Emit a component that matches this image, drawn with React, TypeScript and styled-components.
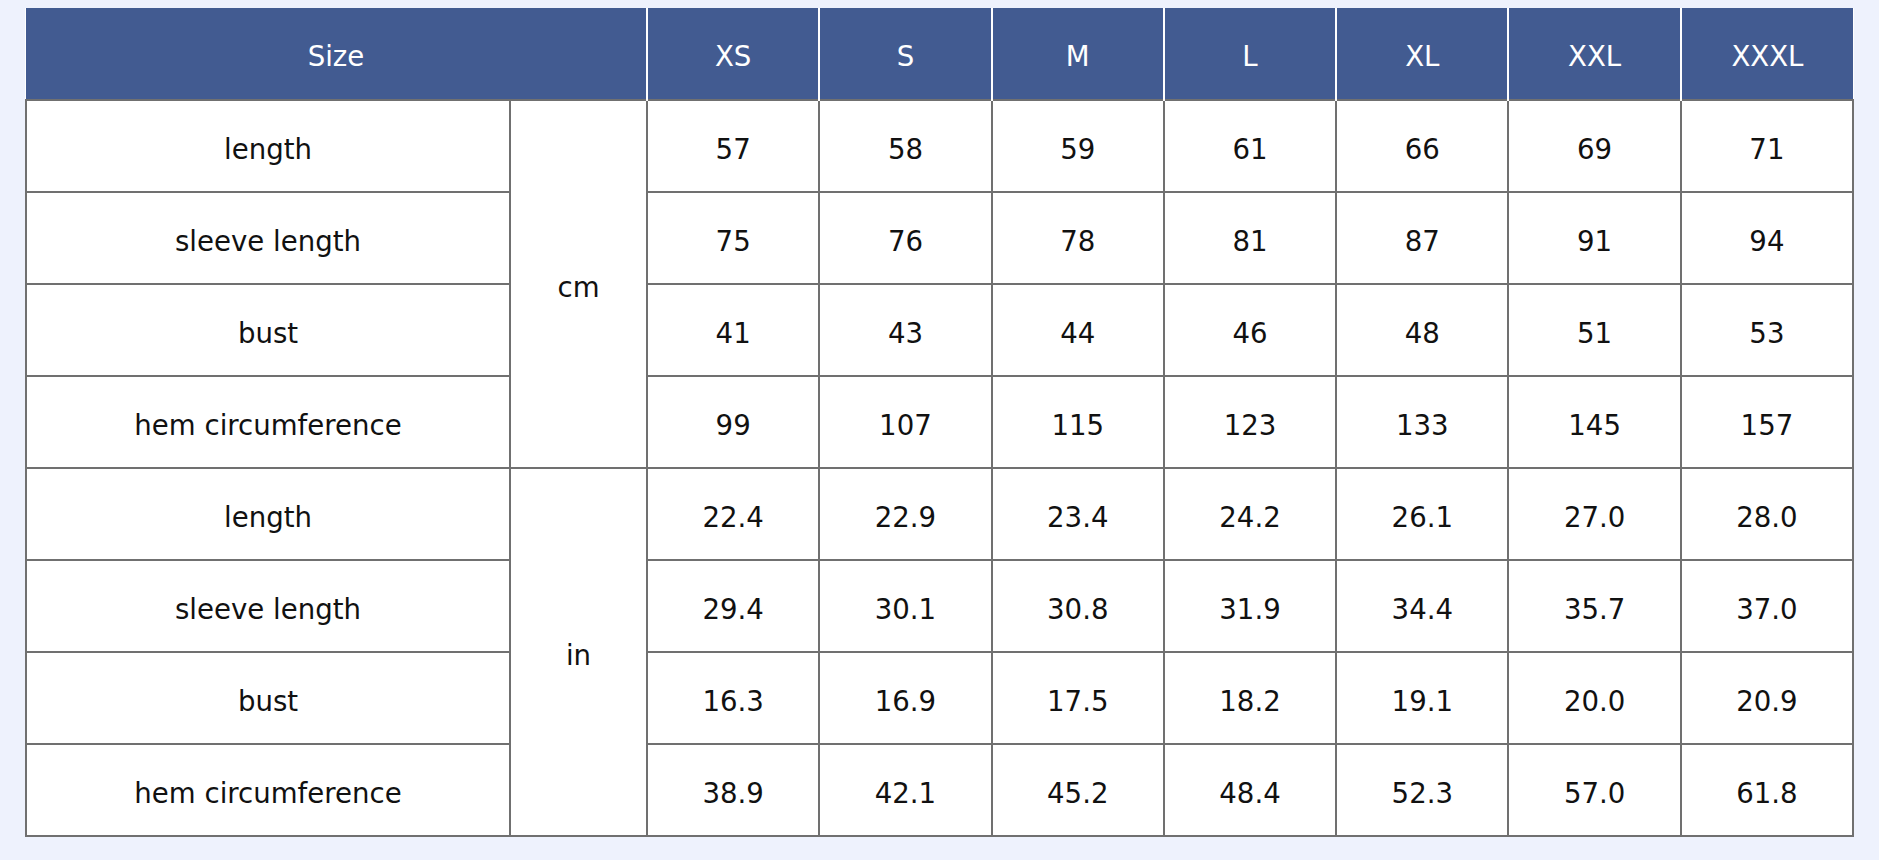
import styled, { createGlobalStyle } from "styled-components";

const GlobalStyle = createGlobalStyle`
  html, body {
    margin: 0;
    padding: 0;
    background: #eef2fd;
  }
  body {
    font-family: "DejaVu Sans", Verdana, sans-serif;
  }
`;

const Page = styled.div`
  padding: 8px 27px 23px 25px;
`;

const Table = styled.table`
  width: 1827px;
  table-layout: fixed;
  border-collapse: collapse;
  background: #fff;
  font-size: 27.6px;
  color: #111;
`;

const HeadCell = styled.th`
  height: 86px;
  padding: 5px 0 0;
  background: #425b91;
  color: #fff;
  font-weight: normal;
  text-align: center;
  border-left: 2px solid #fff;
  &:first-child {
    border-left: none;
  }
`;

const Cell = styled.td`
  height: 83px;
  padding: 7px 0 0;
  text-align: center;
  vertical-align: middle;
  border: 2px solid #707070;
`;

const sizes = ["XS", "S", "M", "L", "XL", "XXL", "XXXL"];

interface IGroup {
  unit: string;
  rows: { label: string; values: string[] }[];
}

const groups: IGroup[] = [
  {
    unit: "cm",
    rows: [
      { label: "length", values: ["57", "58", "59", "61", "66", "69", "71"] },
      { label: "sleeve length", values: ["75", "76", "78", "81", "87", "91", "94"] },
      { label: "bust", values: ["41", "43", "44", "46", "48", "51", "53"] },
      { label: "hem circumference", values: ["99", "107", "115", "123", "133", "145", "157"] },
    ],
  },
  {
    unit: "in",
    rows: [
      { label: "length", values: ["22.4", "22.9", "23.4", "24.2", "26.1", "27.0", "28.0"] },
      { label: "sleeve length", values: ["29.4", "30.1", "30.8", "31.9", "34.4", "35.7", "37.0"] },
      { label: "bust", values: ["16.3", "16.9", "17.5", "18.2", "19.1", "20.0", "20.9"] },
      { label: "hem circumference", values: ["38.9", "42.1", "45.2", "48.4", "52.3", "57.0", "61.8"] },
    ],
  },
];

function App() {
  return (
    <>
      <GlobalStyle />
      <Page>
        <Table>
          <colgroup>
            <col style={{ width: 484 }} />
            <col style={{ width: 137 }} />
            {sizes.map((s) => (
              <col key={s} style={{ width: 172.3 }} />
            ))}
          </colgroup>
          <thead>
            <tr>
              <HeadCell colSpan={2}>Size</HeadCell>
              {sizes.map((s) => (
                <HeadCell key={s}>{s}</HeadCell>
              ))}
            </tr>
          </thead>
          <tbody>
            {groups.map((group) =>
              group.rows.map((row, i) => (
                <tr key={group.unit + row.label}>
                  <Cell>{row.label}</Cell>
                  {i === 0 ? <Cell rowSpan={group.rows.length}>{group.unit}</Cell> : null}
                  {row.values.map((v, j) => (
                    <Cell key={j}>{v}</Cell>
                  ))}
                </tr>
              ))
            )}
          </tbody>
        </Table>
      </Page>
    </>
  );
}

export default App;
